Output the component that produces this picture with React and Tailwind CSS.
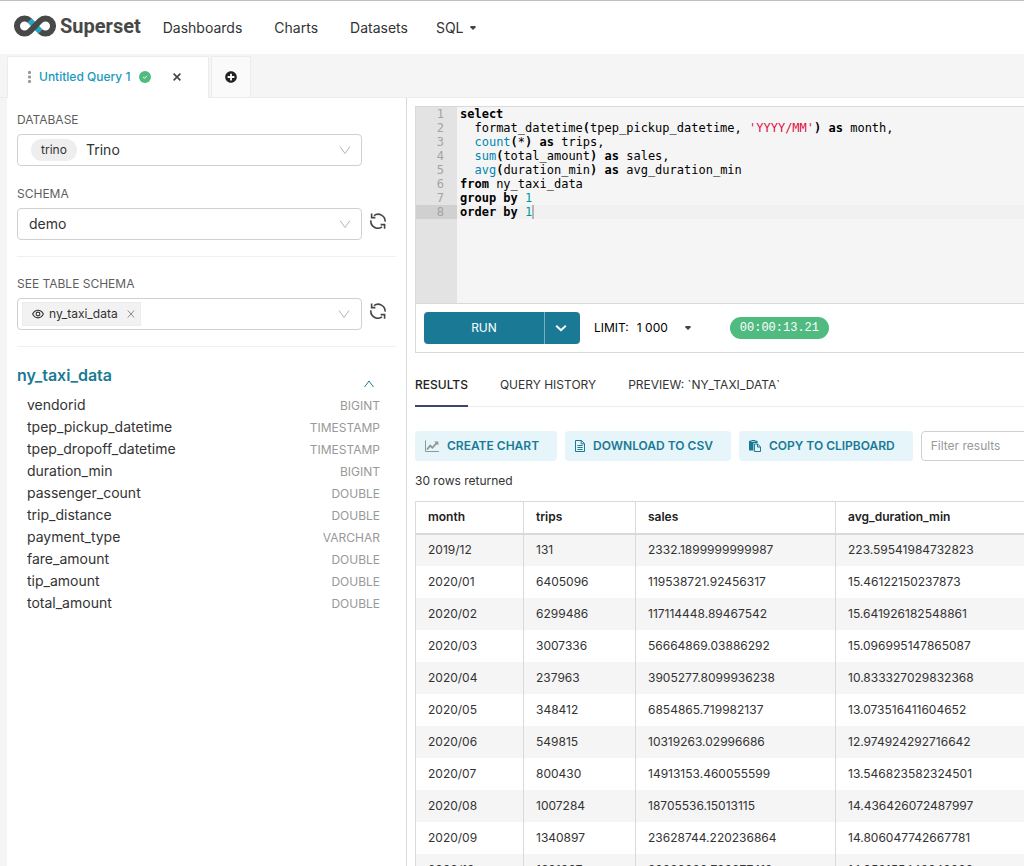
import { useState } from 'react';
import { FaPlusCircle } from 'react-icons/fa';

const TABLE_COLUMNS = [
  { name: 'vendorid', type: 'BIGINT' },
  { name: 'tpep_pickup_datetime', type: 'TIMESTAMP' },
  { name: 'tpep_dropoff_datetime', type: 'TIMESTAMP' },
  { name: 'duration_min', type: 'BIGINT' },
  { name: 'passenger_count', type: 'DOUBLE' },
  { name: 'trip_distance', type: 'DOUBLE' },
  { name: 'payment_type', type: 'VARCHAR' },
  { name: 'fare_amount', type: 'DOUBLE' },
  { name: 'tip_amount', type: 'DOUBLE' },
  { name: 'total_amount', type: 'DOUBLE' },
];

const RESULTS = [
  ['2019/12', '131', '2332.1899999999987', '223.59541984732823'],
  ['2020/01', '6405096', '119538721.92456317', '15.46122150237873'],
  ['2020/02', '6299486', '117114448.89467542', '15.641926182548861'],
  ['2020/03', '3007336', '56664869.03886292', '15.096995147865087'],
  ['2020/04', '237963', '3905277.8099936238', '10.833327029832368'],
  ['2020/05', '348412', '6854865.719982137', '13.073516411604652'],
  ['2020/06', '549815', '10319263.02996686', '12.974924292716642'],
  ['2020/07', '800430', '14913153.460055599', '13.546823582324501'],
  ['2020/08', '1007284', '18705536.15013115', '14.436426072487997'],
  ['2020/09', '1340897', '23628744.220236864', '14.806047742667781'],
  ['2020/10', '1681067', '28898088.709877418', '14.958155448948888'],
];

const RESULT_TABS = ['RESULTS', 'QUERY HISTORY', 'PREVIEW: `NY_TAXI_DATA`'];

function Logo() {
  return (
    <a href="#" className="flex items-center gap-1 pb-[3px] text-[#484848]">
      <svg className="h-[22px] w-[42px]" viewBox="0 0 42 22" fill="none" strokeWidth="6">
        <path d="M15.8 5.7 L26.2 16.3" stroke="#20a7c9" />
        <path
          d="M26.2 16.3 A7.5 7.5 0 1 0 26.2 5.7 L15.8 16.3 A7.5 7.5 0 1 1 15.8 5.7"
          stroke="#484848"
        />
      </svg>
      <span className="font-[Roboto] text-[20px] leading-6 font-bold">Superset</span>
    </a>
  );
}

function RefreshIcon() {
  return (
    <svg className="h-4 w-4" viewBox="0 0 16 16" fill="none" stroke="#454545" strokeWidth="1.6">
      <path d="M4 2.6 A7 7 0 0 1 15.1 8.6" />
      <path d="M1.6 0.4 V4.6 H5.4" />
      <path d="M12 13.8 A7 7 0 0 1 0.9 7.4" />
      <path d="M14.6 15.8 V11.6 H10.6" />
    </svg>
  );
}

function ChevronIcon({ className, up = false }) {
  return (
    <svg className={className} viewBox="0 0 12 12" fill="none" stroke="currentColor">
      <path d={up ? 'M1.5 9 L6 3 L10.5 9' : 'M1 2.5 L6 9.5 L11 2.5'} />
    </svg>
  );
}

function FieldLabel({ htmlFor, children }) {
  return (
    <label htmlFor={htmlFor} className="mb-[5px] block text-[12px] leading-[18px] text-[#5e5e5e]">
      {children}
    </label>
  );
}

function SchemaPanel() {
  return (
    <aside className="w-[400px] shrink-0 border-r border-[#d9d9d9] bg-white px-[10px] pt-[13px]">
      <FieldLabel htmlFor="database">DATABASE</FieldLabel>
      <div className="relative mr-[34px]">
        <select
          id="database"
          className="block h-8 w-full appearance-none rounded border border-[#d0d0d0] bg-white pb-[2px] pl-[68px] text-[14px]"
        >
          <option>Trino</option>
        </select>
        <span className="pointer-events-none absolute top-[5px] left-[14px] rounded-full bg-[#eeeeee] px-[10px] text-[12px] leading-[22px]">
          trino
        </span>
        <ChevronIcon className="pointer-events-none absolute top-[10px] right-[11px] h-3 w-3 text-[#b5b5b5]" />
      </div>

      <div className="mt-[19px]">
        <FieldLabel htmlFor="schema">SCHEMA</FieldLabel>
        <div className="mr-[10px] flex items-start gap-2">
          <div className="relative min-w-0 flex-1">
            <select
              id="schema"
              className="block h-8 w-full appearance-none rounded border border-[#d0d0d0] bg-white pb-[2px] pl-[11px] text-[14px]"
            >
              <option>demo</option>
            </select>
            <ChevronIcon className="pointer-events-none absolute top-[10px] right-[11px] h-3 w-3 text-[#b5b5b5]" />
          </div>
          <button type="button" aria-label="Refresh schemas" className="mt-[5px] shrink-0">
            <RefreshIcon />
          </button>
        </div>
      </div>

      <hr className="mt-4 border-[#f0f0f0]" />

      <div className="mt-[18px]">
        <FieldLabel htmlFor="table-schema">SEE TABLE SCHEMA</FieldLabel>
        <div className="mr-[10px] flex items-start gap-2">
          <div className="flex h-8 min-w-0 flex-1 items-center rounded border border-[#d0d0d0] pr-[11px] pl-1">
            <span className="flex h-6 items-center border border-[#ececec] bg-[#f2f2f2] px-[9px] text-[12px]">
              <svg className="h-3 w-3" viewBox="0 0 12 12" fill="none" stroke="#333" strokeWidth="1.1">
                <path d="M0.6 6 C3.2 0.9 8.8 0.9 11.4 6 C8.8 11.1 3.2 11.1 0.6 6 Z" />
                <circle cx="6" cy="6" r="1.9" />
              </svg>
              <span className="ml-[5px]">ny_taxi_data</span>
              <button type="button" aria-label="Remove ny_taxi_data" className="-mr-1 ml-[9px]">
                <svg className="h-2 w-2" viewBox="0 0 8 8" stroke="#8a8a8a">
                  <path d="M0.8 0.5 L7.2 7.5 M7.2 0.5 L0.8 7.5" />
                </svg>
              </button>
            </span>
            <input id="table-schema" type="text" className="min-w-0 flex-1 outline-none" />
            <ChevronIcon className="h-3 w-3 shrink-0 text-[#b5b5b5]" />
          </div>
          <button type="button" aria-label="Refresh tables" className="mt-[5px] shrink-0">
            <RefreshIcon />
          </button>
        </div>
      </div>

      <hr className="mt-4 border-[#f0f0f0]" />

      <div className="mt-4 mr-4 flex items-start justify-between text-[#1a7a96]">
        <h2 className="text-[16px] leading-6 font-semibold">ny_taxi_data</h2>
        <button type="button" aria-label="Collapse table" className="mt-[15px] mr-[5px]">
          <ChevronIcon up className="h-3 w-3" />
        </button>
      </div>
      <ul className="mt-1 mr-4 ml-[10px]">
        {TABLE_COLUMNS.map((column) => (
          <li key={column.name} className="flex justify-between text-[14px] leading-[22px]">
            <span>{column.name}</span>
            <span className="pt-px text-[12px] leading-[21px] text-[#999]">{column.type}</span>
          </li>
        ))}
      </ul>
    </aside>
  );
}

// Tokens used by the editor lines
const Kw = ({ children }) => <b className="font-bold text-black">{children}</b>;
const Fn = ({ children }) => <span className="text-[#0086b3]">{children}</span>;
const Num = ({ children }) => <span className="text-[#009999]">{children}</span>;

const QUERY_LINES = [
  <Kw>select</Kw>,
  <>{'  '}format_datetime<Kw>(</Kw>tpep_pickup_datetime, <span className="text-[#dd1144]">'YYYY/MM'</span><Kw>)</Kw> <Kw>as</Kw> month,</>,
  <>{'  '}<Fn>count</Fn><Kw>(</Kw>*<Kw>)</Kw> <Kw>as</Kw> trips,</>,
  <>{'  '}<Fn>sum</Fn><Kw>(</Kw>total_amount<Kw>)</Kw> <Kw>as</Kw> sales,</>,
  <>{'  '}<Fn>avg</Fn><Kw>(</Kw>duration_min<Kw>)</Kw> <Kw>as</Kw> avg_duration_min</>,
  <><Kw>from</Kw> ny_taxi_data</>,
  <><Kw>group</Kw> <Kw>by</Kw> <Num>1</Num></>,
  <><Kw>order</Kw> <Kw>by</Kw> <Num>1</Num></>,
];

function SqlEditor() {
  const activeLine = QUERY_LINES.length - 1;
  return (
    <div className="flex h-[197px] overflow-hidden border-t border-l border-[#d9d9d9] bg-[#f5f5f5] font-['DejaVu_Sans_Mono',monospace] text-[12px] leading-[14px] text-black">
      <div className="w-[41px] shrink-0 bg-[#e3e3e3] text-right text-[#a3a3a3]">
        {QUERY_LINES.map((_, i) => (
          <div key={i} className={i === activeLine ? 'bg-[#d0d0d0] pr-[13px]' : 'pr-[13px]'}>
            {i + 1}
          </div>
        ))}
      </div>
      <div
        role="textbox"
        aria-label="SQL query"
        contentEditable
        suppressContentEditableWarning
        spellCheck={false}
        className="flex-1 whitespace-pre outline-none"
      >
        {QUERY_LINES.map((line, i) => (
          <div key={i} className={i === activeLine ? 'flex bg-[#f1f1f1] pl-[3px]' : 'pl-[3px]'}>
            {i === activeLine ? <span className="border-r-2 border-[#b5b5b5]">{line}</span> : line}
          </div>
        ))}
      </div>
    </div>
  );
}

function Caret({ className }) {
  return (
    <svg className={className} viewBox="0 0 6 4" fill="#444">
      <path d="M0.6 0 H5.4 Q6 0.4 5.6 1.2 L3.6 3.6 Q3 4 2.4 3.6 L0.4 1.2 Q0 0.4 0.6 0 Z" />
    </svg>
  );
}

function QueryToolbar() {
  return (
    <div className="flex h-[50px] items-center border-y border-l border-[#d9d9d9] pl-2 text-[12px]">
      <div className="flex h-8 overflow-hidden rounded bg-[#1a7a96] text-white">
        <button type="button" className="w-[120px]">RUN</button>
        <button
          type="button"
          aria-label="More run options"
          className="flex w-9 items-center border-l border-[#76afc0] pl-[10px]"
        >
          <svg className="h-3 w-3" viewBox="0 0 12 12" fill="none" stroke="currentColor" strokeWidth="2">
            <path d="M1.2 3.8 L6 8.2 L10.8 3.8" />
          </svg>
        </button>
      </div>
      <label htmlFor="limit" className="ml-[14px] text-black">LIMIT:</label>
      <div className="relative ml-2">
        <select id="limit" className="block w-[54px] appearance-none bg-transparent text-black">
          <option>1 000</option>
        </select>
        <Caret className="pointer-events-none absolute top-[7px] right-0 h-1 w-[6px]" />
      </div>
      <span className="ml-[39px] rounded-full bg-[#50bb80] px-[10px] font-['Liberation_Mono',monospace] leading-[22px] text-white">
        00:00:13.21
      </span>
    </div>
  );
}

function ActionButton({ icon, children }) {
  return (
    <button
      type="button"
      className="flex h-[30px] shrink-0 items-center gap-2 rounded bg-[#e6f5f9] pr-[18px] pl-[10px] text-[12px] font-semibold whitespace-nowrap text-[#1a7a96]"
    >
      {icon}
      {children}
    </button>
  );
}

const chartIcon = (
  <svg className="h-[14px] w-[14px]" viewBox="0 0 14 14" fill="none" stroke="#8f9698">
    <path d="M0.5 1.5 V12.5 H14" />
    <path d="M2 10.5 L5.2 6.6 L7.4 8.8 L11.8 3.8" strokeWidth="1.8" />
    <path d="M9.2 2.4 H13.4 V6.6 Z" fill="#8f9698" stroke="none" />
  </svg>
);

const fileIcon = (
  <svg className="h-3 w-[10px]" viewBox="0 0 10 12" fill="none" stroke="currentColor">
    <path d="M0.5 0.5 H6.4 L9.5 3.6 V11.5 H0.5 Z" />
    <path d="M6.2 0.5 V3.8 H9.5 M2.4 5.5 H7.6 M2.4 7.5 H7.6 M2.4 9.5 H7.6" />
  </svg>
);

const pasteIcon = (
  <svg className="h-3 w-3" viewBox="0 0 12 12" fill="currentColor">
    <path d="M0.6 0.8 H2.4 V0 H6.2 V0.8 H8 Q8.6 0.8 8.6 1.4 V3 H5.2 Q4.4 3 4.4 3.8 V10.4 H0.6 Q0 10.4 0 9.8 V1.4 Q0 0.8 0.6 0.8 Z" />
    <path d="M2.4 1.2 H6.2 V1.9 H2.4 Z" fill="#e6f5f9" />
    <path d="M5.4 4 H8.6 L11.5 6.9 V11.5 H5.4 Z M8.5 4 V7 H11.5" fill="none" stroke="currentColor" />
  </svg>
);

function ResultsPane() {
  const [active, setActive] = useState(RESULT_TABS[0]);
  return (
    <section>
      <div role="tablist" className="mt-[11px] flex gap-8 border-b border-[#ececec] text-[12px]">
        {RESULT_TABS.map((tab) => (
          <button
            key={tab}
            type="button"
            role="tab"
            aria-selected={tab === active}
            onClick={() => setActive(tab)}
            className={
              tab === active
                ? '-mb-px h-[43px] border-b-2 border-[#3f4374] font-medium whitespace-nowrap text-[#222]'
                : '-mb-px h-[43px] border-b-2 border-transparent whitespace-nowrap'
            }
          >
            {tab}
          </button>
        ))}
      </div>

      <div className="mt-6 flex gap-2 overflow-hidden">
        <ActionButton icon={chartIcon}>CREATE CHART</ActionButton>
        <ActionButton icon={fileIcon}>DOWNLOAD TO CSV</ActionButton>
        <ActionButton icon={pasteIcon}>COPY TO CLIPBOARD</ActionButton>
        <input
          type="text"
          aria-label="Filter results"
          placeholder="Filter results"
          className="h-[30px] w-[200px] shrink-0 rounded border border-[#d0d0d0] px-[9px] pb-[2px] text-[12px] placeholder:text-[#999]"
        />
      </div>

      <p className="mt-[11px] text-[12px] leading-[18px]">30 rows returned</p>

      <table className="mt-[11px] w-full table-fixed border-t border-[#d9d9d9] text-left text-[12px]">
        <colgroup>
          <col className="w-[108px]" />
          <col className="w-[112px]" />
          <col className="w-[200px]" />
          <col />
        </colgroup>
        <thead>
          <tr className="h-8 border-b-2 border-[#d9d9d9]">
            {['month', 'trips', 'sales', 'avg_duration_min'].map((name) => (
              <th key={name} className="border-l border-[#d9d9d9] px-3 font-semibold text-[#222]">
                {name}
              </th>
            ))}
          </tr>
        </thead>
        <tbody>
          {RESULTS.map((row) => (
            <tr key={row[0]} className="h-8 odd:bg-[#f5f5f5]">
              {row.map((value) => (
                <td key={value} className="border-l border-[#d9d9d9] px-3">{value}</td>
              ))}
            </tr>
          ))}
        </tbody>
      </table>
    </section>
  );
}

function NavBar() {
  return (
    <header className="flex h-[54px] shrink-0 items-center border-t border-[#c0c0c0] bg-white pl-[14px]">
      <Logo />
      <nav className="ml-[22px] flex items-center gap-8 text-[14px]">
        <a href="#">Dashboards</a>
        <a href="#">Charts</a>
        <a href="#">Datasets</a>
        <button type="button" className="-ml-1 flex items-center gap-[6px]">
          SQL
          <Caret className="h-1 w-[6px]" />
        </button>
      </nav>
    </header>
  );
}

function QueryTabs() {
  return (
    <div className="flex h-11 shrink-0 border-b border-[#ececec] bg-[#f5f5f5] pt-[2px] pl-[7px]">
      <div className="-mb-px flex w-[202px] items-center rounded-t-xs border border-b-0 border-[#ececec] bg-white pb-[2px] pl-5 text-[12px]">
        <svg className="h-3 w-[3px]" viewBox="0 0 3 12" fill="#999">
          <rect width="3" height="3" rx="1" />
          <rect y="4.5" width="3" height="3" rx="1" />
          <rect y="9" width="3" height="3" rx="1" />
        </svg>
        <a href="#" className="ml-2 font-medium text-[#1a98bd]">Untitled Query 1</a>
        <svg className="ml-[9px] h-3 w-3" viewBox="0 0 12 12" fill="none">
          <circle cx="6" cy="6" r="6" fill="#50bb80" />
          <path d="M4.2 6.1 L5.5 7.3 L7.9 4.8" stroke="#fff" />
        </svg>
        <button type="button" aria-label="Close tab" className="ml-[22px]">
          <svg className="h-2 w-2" viewBox="0 0 8 8" stroke="#444" strokeWidth="1.6">
            <path d="M0.6 0.6 L7.4 7.4 M7.4 0.6 L0.6 7.4" />
          </svg>
        </button>
      </div>
      <button
        type="button"
        aria-label="Add tab"
        className="ml-[2px] flex w-10 items-center justify-center border border-b-0 border-[#ececec] bg-[#fafafa]"
      >
        <FaPlusCircle className="h-3 w-3 text-[#222]" />
      </button>
    </div>
  );
}

export default function App() {
  return (
    <div className="flex h-screen flex-col overflow-hidden bg-[#f5f5f5] font-[Inter,sans-serif] text-[#333]">
      <NavBar />
      <QueryTabs />
      <div className="flex min-h-0 flex-1 pl-[7px]">
        <SchemaPanel />
        <main className="min-w-0 flex-1 overflow-hidden bg-white pt-2 pl-2">
          <SqlEditor />
          <QueryToolbar />
          <ResultsPane />
        </main>
      </div>
    </div>
  );
}
